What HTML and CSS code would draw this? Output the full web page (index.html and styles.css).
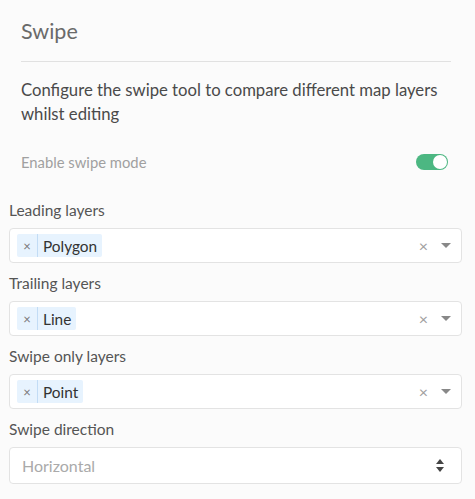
FILE: index.html
```html
<!DOCTYPE html>
<html>
<head>
<meta charset="utf-8">
<link rel="stylesheet" href="styles.css">
</head>
<body>
<div class="panel">
  <div class="header">
    <h1 class="title">Swipe</h1>
  </div>
  <div class="intro">
    <p class="desc">Configure the swipe tool to compare different map layers whilst editing</p>
    <div class="toggle-row">
      <span class="toggle-label">Enable swipe mode</span>
      <span class="toggle"><span class="knob"></span></span>
    </div>
  </div>
  <div class="fields">
    <div class="field">
      <div class="label">Leading layers</div>
      <div class="box">
        <span class="tag"><span class="tag-x">×</span><span class="tag-text">Polygon</span></span>
        <span class="clear">×</span>
        <span class="caret"></span>
      </div>
    </div>
    <div class="field">
      <div class="label">Trailing layers</div>
      <div class="box">
        <span class="tag"><span class="tag-x">×</span><span class="tag-text">Line</span></span>
        <span class="clear">×</span>
        <span class="caret"></span>
      </div>
    </div>
    <div class="field">
      <div class="label">Swipe only layers</div>
      <div class="box">
        <span class="tag"><span class="tag-x">×</span><span class="tag-text">Point</span></span>
        <span class="clear">×</span>
        <span class="caret"></span>
      </div>
    </div>
    <div class="field">
      <div class="label">Swipe direction</div>
      <div class="box select">
        <span class="placeholder">Horizontal</span>
        <svg class="updown" width="8" height="13" viewBox="0 0 8 13"><path d="M4 0 L8 5 L0 5 Z" fill="#444"/><path d="M0 8 L8 8 L4 13 Z" fill="#444"/></svg>
      </div>
    </div>
  </div>
</div>
</body>
</html>
```

FILE: styles.css
```css
html, body {
  margin: 0;
  padding: 0;
  background: #fbfbfb;
}
body {
  font-family: Lato, "Open Sans", sans-serif;
  color: #444;
}
.panel {
  width: 475px;
  padding: 17px 0 0 0;
  box-sizing: border-box;
}
.header {
  margin: 0 24px 0 21px;
  padding-bottom: 16px;
  border-bottom: 1px solid #e1e1e1;
}
.title {
  margin: 0;
  font-size: 21.5px;
  line-height: 28px;
  font-weight: 400;
  color: #6a6a6a;
}
.intro {
  padding: 16px 27px 0 21px;
}
.desc {
  margin: 0;
  font-size: 16.7px;
  line-height: 24px;
  color: #4a4a4a;
}
.toggle-row {
  margin-top: 28px;
  display: flex;
  align-items: center;
  justify-content: space-between;
  height: 16px;
}
.toggle-label {
  font-size: 14.8px;
  color: #a0a0a0;
}
.toggle {
  width: 32px;
  height: 16px;
  border-radius: 8px;
  background: #4cb782;
  display: flex;
  align-items: center;
  justify-content: flex-end;
  padding: 0 1px;
  box-sizing: border-box;
}
.knob {
  width: 14px;
  height: 14px;
  border-radius: 50%;
  background: #fff;
}
.fields {
  padding: 30px 13px 0 9px;
  display: flex;
  flex-direction: column;
  gap: 10px;
}
.label {
  font-size: 15.5px;
  line-height: 20px;
  color: #555;
  margin-bottom: 8px;
}
.box {
  height: 35px;
  box-sizing: border-box;
  border: 1px solid #e3e3e3;
  border-radius: 4px;
  background: #fff;
  display: flex;
  align-items: center;
  padding: 0 10px 0 7px;
}
.tag {
  display: flex;
  align-items: stretch;
  height: 23px;
  background: #e7f3fe;
  border-radius: 2px;
  font-size: 15.4px;
  color: #333;
}
.tag-x {
  width: 20px;
  display: flex;
  align-items: center;
  justify-content: center;
  color: #777;
  font-size: 13px;
  border-right: 1px solid #c2dcf5;
}
.tag-text {
  display: flex;
  align-items: center;
  padding: 0 5px;
}
.clear {
  margin-left: auto;
  color: #a0a0a0;
  font-size: 16px;
  line-height: 16px;
  margin-right: 13px;
}
.caret {
  width: 0;
  height: 0;
  border-left: 5px solid transparent;
  border-right: 5px solid transparent;
  border-top: 5px solid #888;
}
.box.select {
  height: 37px;
  padding: 0 17px 0 12px;
}
.placeholder {
  font-size: 16px;
  color: #aaa;
}
.updown {
  margin-left: auto;
  display: block;
}
```
